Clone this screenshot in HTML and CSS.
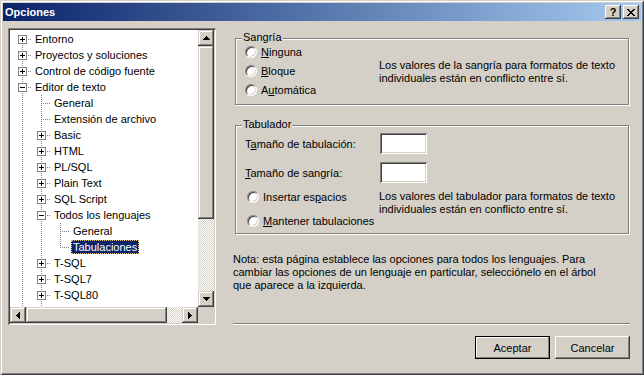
FILE: index.html
```html
<!DOCTYPE html>
<html lang="es">
<head>
    <meta charset="UTF-8">
    <title>Opciones</title>
    <link rel="stylesheet" href="styles.css">
</head>
<body>

    <div class="ventana">
        <div class="titre">
            <span class="titre-texto">Opciones</span>
            <button class="btn-titre ayuda">?</button>
            <button class="btn-titre cerrar">
                <svg width="8" height="7" viewBox="0 0 8 7" shape-rendering="crispEdges"><path d="M0 0h2v1h1v1h2v-1h1v-1h2v1h-1v1h-1v1h-1v1h1v1h1v1h1v1h-2v-1h-1v-1h-2v1h-1v1h-2v-1h1v-1h1v-1h1v-1h-1v-1h-1v-1h-1z" fill="#000"/></svg>
            </button>
        </div>

        <div class="contenu">
            <div class="arbre">
                <div class="noeuds">
                    <div class="ligne"><i class="g tee first"><b class="exp plus"></b></i><span class="lbl">Entorno</span></div>
                    <div class="ligne"><i class="g tee"><b class="exp plus"></b></i><span class="lbl">Proyectos y soluciones</span></div>
                    <div class="ligne"><i class="g tee"><b class="exp plus"></b></i><span class="lbl">Control de código fuente</span></div>
                    <div class="ligne"><i class="g tee"><b class="exp"></b></i><span class="lbl">Editor de texto</span></div>
                    <div class="ligne"><i class="g"></i><i class="g tee"></i><span class="lbl">General</span></div>
                    <div class="ligne"><i class="g"></i><i class="g tee"></i><span class="lbl">Extensión de archivo</span></div>
                    <div class="ligne"><i class="g"></i><i class="g tee"><b class="exp plus"></b></i><span class="lbl">Basic</span></div>
                    <div class="ligne"><i class="g"></i><i class="g tee"><b class="exp plus"></b></i><span class="lbl">HTML</span></div>
                    <div class="ligne"><i class="g"></i><i class="g tee"><b class="exp plus"></b></i><span class="lbl">PL/SQL</span></div>
                    <div class="ligne"><i class="g"></i><i class="g tee"><b class="exp plus"></b></i><span class="lbl">Plain Text</span></div>
                    <div class="ligne"><i class="g"></i><i class="g tee"><b class="exp plus"></b></i><span class="lbl">SQL Script</span></div>
                    <div class="ligne"><i class="g"></i><i class="g tee"><b class="exp"></b></i><span class="lbl">Todos los lenguajes</span></div>
                    <div class="ligne"><i class="g"></i><i class="g"></i><i class="g tee"></i><span class="lbl">General</span></div>
                    <div class="ligne"><i class="g"></i><i class="g"></i><i class="g tee fin"></i><span class="lbl sel">Tabulaciones</span></div>
                    <div class="ligne"><i class="g"></i><i class="g tee"><b class="exp plus"></b></i><span class="lbl">T-SQL</span></div>
                    <div class="ligne"><i class="g"></i><i class="g tee"><b class="exp plus"></b></i><span class="lbl">T-SQL7</span></div>
                    <div class="ligne"><i class="g"></i><i class="g tee"><b class="exp plus"></b></i><span class="lbl">T-SQL80</span></div>
                    <div class="ligne"><i class="g"></i><i class="g"></i></div>
                </div>

                <div class="vscroll">
                    <div class="fleche"><svg width="7" height="4" viewBox="0 0 7 4" shape-rendering="crispEdges"><path d="M3 0h1v1h1v1h1v1h1v1h-7v-1h1v-1h1v-1h1z"/></svg></div>
                    <div class="pouce v"></div>
                    <div class="piste"></div>
                    <div class="fleche"><svg width="7" height="4" viewBox="0 0 7 4" shape-rendering="crispEdges"><path d="M0 0h7v1h-1v1h-1v1h-1v1h-1v-1h-1v-1h-1v-1h-1z"/></svg></div>
                </div>

                <div class="hscroll">
                    <div class="fleche"><svg width="4" height="7" viewBox="0 0 4 7" shape-rendering="crispEdges"><path d="M3 0h1v7h-1v-1h-1v-1h-1v-1h-1v-1h1v-1h1v-1h1z"/></svg></div>
                    <div class="pouce h"></div>
                    <div class="piste"></div>
                    <div class="fleche"><svg width="4" height="7" viewBox="0 0 4 7" shape-rendering="crispEdges"><path d="M0 0h1v1h1v1h1v1h1v1h-1v1h-1v1h-1v1h-1z"/></svg></div>
                </div>
                <div class="coin"></div>
            </div>

            <div class="options">
                <div class="groupe sangria">
                    <span class="groupe-titre">Sangría</span>
                    <div class="radios">
                        <div class="radio-ligne"><span class="radio"></span><span><u>N</u>inguna</span></div>
                        <div class="radio-ligne"><span class="radio"></span><span><u>B</u>loque</span></div>
                        <div class="radio-ligne"><span class="radio"></span><span>A<u>u</u>tomática</span></div>
                    </div>
                    <p class="desc">Los valores de la sangría para formatos de texto<br>individuales están en conflicto entre sí.</p>
                </div>

                <div class="groupe tabulador">
                    <span class="groupe-titre">Tabulador</span>
                    <div class="champ">
                        <label>T<u>a</u>maño de tabulación:</label>
                        <span class="saisie"></span>
                    </div>
                    <div class="champ second">
                        <label><u>T</u>amaño de sangría:</label>
                        <span class="saisie"></span>
                    </div>
                    <div class="bas">
                        <div class="radios">
                            <div class="radio-ligne"><span class="radio"></span><span>Insertar es<u>p</u>acios</span></div>
                            <div class="radio-ligne"><span class="radio"></span><span><u>M</u>antener tabulaciones</span></div>
                        </div>
                        <p class="desc">Los valores del tabulador para formatos de texto<br>individuales están en conflicto entre sí.</p>
                    </div>
                </div>

                <p class="nota">Nota: esta página establece las opciones para todos los lenguajes. Para<br>cambiar las opciones de un lenguaje en particular, selecciónelo en el árbol<br>que aparece a la izquierda.</p>

                <div class="separateur"></div>

                <div class="boutons">
                    <button class="bouton defaut">Aceptar</button>
                    <button class="bouton">Cancelar</button>
                </div>
            </div>
        </div>
    </div>

</body>
</html>
```

FILE: styles.css
```css
* {
    padding: 0;
    margin: 0;
    box-sizing: border-box;
}

body {
    width: 644px;
    height: 375px;
    overflow: hidden;
    font-family: "Liberation Sans", Arial, sans-serif;
    font-size: 11px;
    color: #000;
    background-color: #d4d0c8;
}

button {
    font-family: inherit;
    font-size: 11px;
    color: #000;
    border: none;
    background-color: #d4d0c8;
}

.ventana {
    width: 644px;
    height: 375px;
    padding: 3px;
    background-color: #d4d0c8;
    box-shadow: inset 1px 1px #d4d0c8, inset -1px -1px #404040, inset 2px 2px #fff, inset -2px -2px #808080;
}

/* barre de titre */
.titre {
    height: 18px;
    display: flex;
    align-items: center;
    padding-left: 2px;
    background: linear-gradient(to right, #0a246a, #a6caf0);
}

.titre-texto {
    flex: 1;
    color: white;
    font-weight: bold;
}

.btn-titre {
    width: 16px;
    height: 14px;
    display: flex;
    justify-content: center;
    align-items: center;
    font-weight: bold;
    line-height: 14px;
    box-shadow: inset -1px -1px #404040, inset 1px 1px #fff, inset -2px -2px #808080, inset 2px 2px #d4d0c8;
}

.ayuda {
    margin-right: 2px;
}

.cerrar {
    margin-right: 2px;
}

.contenu {
    display: flex;
    padding: 7px 0 0 5px;
}

/* arbre */
.arbre {
    width: 208px;
    height: 297px;
    padding: 2px;
    display: grid;
    grid-template-columns: 188px 16px;
    grid-template-rows: 277px 16px;
    background-color: white;
    box-shadow: inset 1px 1px #808080, inset -1px -1px #fff, inset 2px 2px #404040, inset -2px -2px #d4d0c8;
}

.noeuds {
    overflow: hidden;
    padding: 1px 0 0 3px;
}

.ligne {
    height: 16px;
    display: flex;
    align-items: center;
    white-space: nowrap;
}

.g {
    position: relative;
    flex: none;
    width: 19px;
    height: 16px;
}

.g::before {
    content: "";
    position: absolute;
    left: 9px;
    top: 0;
    width: 1px;
    height: 16px;
    background: repeating-linear-gradient(#808080 0 1px, transparent 1px 2px);
}

.tee::after {
    content: "";
    position: absolute;
    left: 10px;
    top: 8px;
    width: 9px;
    height: 1px;
    background: repeating-linear-gradient(90deg, transparent 0 1px, #808080 1px 2px);
}

.first::before {
    top: 8px;
    height: 8px;
}

.fin::before {
    height: 9px;
}

.exp {
    position: absolute;
    left: 5px;
    top: 4px;
    width: 9px;
    height: 9px;
    border: 1px solid #808080;
    background-color: white;
    z-index: 1;
}

.exp::before {
    content: "";
    position: absolute;
    left: 1px;
    top: 3px;
    width: 5px;
    height: 1px;
    background-color: black;
}

.plus::after {
    content: "";
    position: absolute;
    left: 3px;
    top: 1px;
    width: 1px;
    height: 5px;
    background-color: black;
}

.lbl {
    margin-left: 1px;
    padding: 0 2px;
    line-height: 14px;
}

.sel {
    background-color: #0a246a;
    color: white;
    outline: 1px dotted #e8c878;
    outline-offset: -1px;
}

/* barres de défilement */
.vscroll {
    display: flex;
    flex-direction: column;
}

.hscroll {
    display: flex;
}

.fleche,
.pouce {
    flex: none;
    background-color: #d4d0c8;
    box-shadow: inset -1px -1px #404040, inset 1px 1px #d4d0c8, inset -2px -2px #808080, inset 2px 2px #fff;
}

.fleche {
    width: 16px;
    height: 16px;
    display: flex;
    justify-content: center;
    align-items: center;
}

.pouce.v {
    height: 173px;
}

.pouce.h {
    width: 141px;
}

.piste {
    flex: 1;
    background: repeating-conic-gradient(#d4d0c8 0 25%, #fff 0 50%) 0 0 / 2px 2px;
}

.coin {
    background-color: #d4d0c8;
}

/* panneau de droite */
.options {
    width: 397px;
    margin-left: 17px;
}

.groupe {
    position: relative;
    width: 394px;
    margin-left: 2px;
    border: 1px solid #808080;
    box-shadow: inset 1px 1px #fff, 1px 1px #fff;
}

.groupe-titre {
    position: absolute;
    top: -8px;
    left: 6px;
    padding: 0 1px;
    line-height: 13px;
    background-color: #d4d0c8;
}

.sangria {
    height: 67px;
    margin-top: 10px;
    padding: 3px 0 0 9px;
    display: grid;
    grid-template-columns: 134px 1fr;
    align-items: start;
}

.sangria .desc {
    align-self: center;
    margin-top: -3px;
}

.radios {
    display: flex;
    flex-direction: column;
}

.radio-ligne {
    height: 19px;
    display: flex;
    align-items: center;
    gap: 4px;
    white-space: nowrap;
}

.radio {
    width: 12px;
    height: 12px;
    border-radius: 50%;
    background-color: white;
    border: 1px solid;
    border-color: #808080 #fff #fff #808080;
    box-shadow: inset 1px 1px #404040, inset -1px -1px #d4d0c8;
}

.desc {
    line-height: 13px;
    white-space: nowrap;
}

.tabulador {
    height: 109px;
    margin-top: 20px;
    padding: 7px 0 0 9px;
}

.champ {
    height: 21px;
    display: flex;
    align-items: center;
}

.champ label {
    width: 135px;
}

.champ.second {
    margin-top: 8px;
}

.saisie {
    width: 47px;
    height: 21px;
    background-color: white;
    box-shadow: inset 1px 1px #808080, inset -1px -1px #fff, inset 2px 2px #404040, inset -2px -2px #d4d0c8;
}

.bas {
    display: grid;
    grid-template-columns: 134px 1fr;
    margin-top: 4px;
}

.bas .radios {
    padding-left: 2px;
    gap: 4px;
}

.bas .radio-ligne {
    height: 20px;
}

.bas .desc {
    margin-top: 3px;
}

.nota {
    margin-top: 19px;
    line-height: 13px;
    white-space: nowrap;
}

.separateur {
    margin-top: 31px;
    height: 2px;
    border-top: 1px solid #808080;
    border-bottom: 1px solid #fff;
}

.boutons {
    display: flex;
    justify-content: flex-end;
    gap: 5px;
    margin-top: 11px;
}

.bouton {
    width: 75px;
    height: 23px;
    box-shadow: inset -1px -1px #404040, inset 1px 1px #fff, inset -2px -2px #808080, inset 2px 2px #d4d0c8;
}

.bouton.defaut {
    border: 1px solid black;
    box-shadow: inset -1px -1px #808080, inset 1px 1px #fff;
}
```
